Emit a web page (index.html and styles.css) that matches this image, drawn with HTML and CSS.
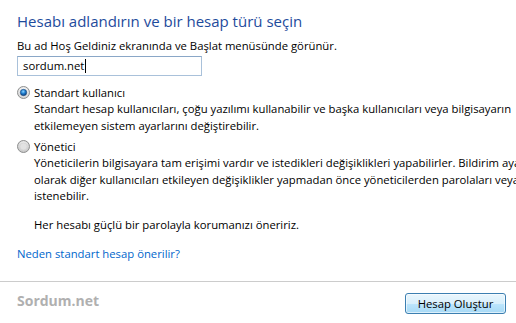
FILE: index.html
```html
<!DOCTYPE html>
<html lang="tr">
<head>
<meta charset="utf-8">
<link rel="stylesheet" href="styles.css">
</head>
<body>
<div class="page">
  <main class="content">
    <h1 class="title">Hesabı adlandırın ve bir hesap türü seçin</h1>
    <p class="hint">Bu ad Hoş Geldiniz ekranında ve Başlat menüsünde görünür.</p>
    <div class="textbox"><span class="value">sordum.net</span><span class="caret"></span></div>

    <div class="option first">
      <div class="radio-row">
        <svg class="radio" width="13" height="13" viewBox="0 0 13 13">
          <defs>
            <radialGradient id="rb" cx="50%" cy="35%" r="60%">
              <stop offset="0" stop-color="#ffffff"/>
              <stop offset="1" stop-color="#d6d6d6"/>
            </radialGradient>
            <radialGradient id="dot" cx="45%" cy="35%" r="65%">
              <stop offset="0" stop-color="#8fd4ff"/>
              <stop offset="0.5" stop-color="#1f7fd0"/>
              <stop offset="1" stop-color="#0b3a78"/>
            </radialGradient>
          </defs>
          <circle cx="6.5" cy="6.5" r="6" fill="url(#rb)" stroke="#8e8f8f" stroke-width="1"/>
          <circle cx="6.5" cy="6.5" r="3.2" fill="url(#dot)" stroke="#1d4c80" stroke-width="0.6"/>
        </svg>
        <span class="label">Standart kullanıcı</span>
      </div>
      <p class="desc">Standart hesap kullanıcıları, çoğu yazılımı kullanabilir ve başka kullanıcıları veya bilgisayarın<br>etkilemeyen sistem ayarlarını değiştirebilir.</p>
    </div>

    <div class="option second">
      <div class="radio-row">
        <svg class="radio" width="13" height="13" viewBox="0 0 13 13">
          <defs>
            <radialGradient id="rb2" cx="50%" cy="30%" r="70%">
              <stop offset="0" stop-color="#f4f4f4"/>
              <stop offset="1" stop-color="#c4c4c4"/>
            </radialGradient>
          </defs>
          <circle cx="6.5" cy="6.5" r="6" fill="url(#rb2)" stroke="#8e8f8f" stroke-width="1"/>
          <circle cx="6.5" cy="6.5" r="3.6" fill="#e2e2e2" stroke="#d0d0d0" stroke-width="0.6"/>
        </svg>
        <span class="label">Yönetici</span>
      </div>
      <p class="desc">Yöneticilerin bilgisayara tam erişimi vardır ve istedikleri değişiklikleri yapabilirler. Bildirim ayarlarına bağlı<br>olarak diğer kullanıcıları etkileyen değişiklikler yapmadan önce yöneticilerden parolaları veya onay vermeleri<br>istenebilir.</p>
      <p class="desc advice">Her hesabı güçlü bir parolayla korumanızı öneririz.</p>
    </div>

    <a class="link" href="#">Neden standart hesap önerilir?</a>
  </main>

  <footer class="footer">
    <span class="brand">Sordum.net</span>
    <button class="btn" type="button">Hesap Oluştur</button>
  </footer>
</div>
</body>
</html>
```

FILE: styles.css
```css
html, body {
  margin: 0;
  padding: 0;
  background: #ffffff;
}

body {
  width: 516px;
  height: 323px;
  overflow: hidden;
  font-family: "Open Sans", "Noto Sans", "DejaVu Sans", sans-serif;
  font-size: 11.3px;
  color: #000000;
}

.page {
  display: flex;
  flex-direction: column;
  height: 323px;
  width: 516px;
  overflow: hidden;
}

.content {
  padding: 11px 0 0 17px;
  flex: 1;
  display: flex;
  flex-direction: column;
  align-items: flex-start;
  min-width: 0;
}

.title {
  margin: 0;
  font-size: 15px;
  font-weight: 400;
  line-height: 20px;
  color: #1e4b9c;
  white-space: nowrap;
}

.hint {
  margin: 7px 0 0 0;
  line-height: 16px;
  white-space: nowrap;
}

.textbox {
  margin-top: 2px;
  box-sizing: border-box;
  width: 185px;
  height: 20px;
  border: 1px solid #a9c1da;
  border-top-color: #8aa7c7;
  display: flex;
  align-items: center;
  padding-left: 5px;
  line-height: 16px;
}

.caret {
  display: inline-block;
  width: 1px;
  height: 14px;
  background: #000;
  margin-left: 1px;
}

.option {
  display: flex;
  flex-direction: column;
}

.option.first {
  margin-top: 8px;
}

.option.second {
  margin-top: 4px;
}

.radio-row {
  display: flex;
  align-items: center;
  gap: 4px;
  line-height: 17px;
  height: 17px;
}

.radio {
  display: block;
  flex: none;
}

.label {
  white-space: nowrap;
}

.desc {
  margin: 0 0 0 17px;
  line-height: 16.5px;
  white-space: nowrap;
}

.desc.advice {
  margin-top: 12px;
}

.link {
  margin-top: 12px;
  color: #0066cc;
  text-decoration: none;
  line-height: 17px;
  white-space: nowrap;
}

.footer {
  flex: none;
  height: 41px;
  border-top: 1px solid #cccccc;
  display: flex;
  align-items: center;
  justify-content: space-between;
  padding: 0 10px 0 17px;
}

.brand {
  font-family: "Open Sans", "Noto Sans", sans-serif;
  font-weight: 700;
  font-size: 14px;
  color: #b0b0b0;
  margin-top: -4px;
}

.btn {
  box-sizing: border-box;
  width: 101px;
  height: 21px;
  padding: 0;
  font-family: inherit;
  font-size: 11.3px;
  color: #000;
  border: 1px solid #3c7fb1;
  border-radius: 3px;
  background: linear-gradient(to bottom, #eaf6fd 0%, #d9f0fc 50%, #bee6fd 50%, #a7d9f5 100%);
  box-shadow: inset 0 0 0 1px rgba(255,255,255,0.6);
  margin-top: 1px;
}
```
